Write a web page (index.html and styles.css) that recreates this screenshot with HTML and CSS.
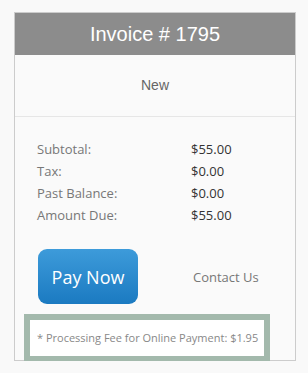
FILE: index.html
```html
<!DOCTYPE html>
<html lang="en">
<head>
    <meta charset="UTF-8">
    <title>Invoice</title>
    <link rel="stylesheet" href="styles.css">
</head>
<body>
    <div class="invoice">
        <div class="invoice-header">Invoice # 1795</div>
        <div class="invoice-status">New</div>
        <div class="invoice-totals">
            <div class="row"><span class="label">Subtotal:</span><span class="value">$55.00</span></div>
            <div class="row"><span class="label">Tax:</span><span class="value">$0.00</span></div>
            <div class="row"><span class="label">Past Balance:</span><span class="value">$0.00</span></div>
            <div class="row"><span class="label">Amount Due:</span><span class="value">$55.00</span></div>
        </div>
        <div class="actions">
            <button class="pay-button">Pay Now</button>
            <a class="contact-link" href="#">Contact Us</a>
        </div>
        <div class="fee-note">* Processing Fee for Online Payment: $1.95</div>
    </div>
</body>
</html>
```

FILE: styles.css
```css
body {
    margin: 0;
    padding: 12px 0 0 14px;
    background-color: #f9f9f9;
    font-family: 'Open Sans', sans-serif;
}
.invoice {
    width: 280px;
    border: 1px solid #cccccc;
    background-color: #fafafa;
}
.invoice-header {
    height: 42px;
    line-height: 42px;
    background-color: #8c8c8c;
    color: white;
    font-family: 'Liberation Sans', Arial, sans-serif;
    font-size: 20px;
    text-align: center;
}
.invoice-status {
    height: 61px;
    line-height: 61px;
    border-bottom: 1px solid #e6e6e6;
    color: #666666;
    font-family: 'Liberation Sans', Arial, sans-serif;
    font-size: 14px;
    text-align: center;
}
.invoice-totals {
    padding: 21px 0 0 22px;
}
.row {
    display: grid;
    grid-template-columns: 154px 1fr;
    height: 22px;
    line-height: 22px;
    font-size: 13px;
}
.label {
    color: #777777;
}
.value {
    color: #333333;
}
.actions {
    display: flex;
    align-items: center;
    margin-top: 23px;
    padding-left: 23px;
}
.pay-button {
    width: 100px;
    height: 55px;
    border: none;
    border-radius: 9px;
    background: linear-gradient(#3d9bda, #1b7ac1);
    color: white;
    font-family: 'Open Sans', sans-serif;
    font-size: 18px;
    cursor: pointer;
}
.contact-link {
    margin-left: 55px;
    color: #777777;
    font-size: 13px;
    text-decoration: none;
}
.fee-note {
    width: 227px;
    height: 36px;
    line-height: 36px;
    margin: 10px 0 -2px 9px;
    padding-left: 7px;
    border: 6px solid #a3b9ac;
    background-color: white;
    color: #888888;
    font-size: 11px;
    white-space: nowrap;
}
```
